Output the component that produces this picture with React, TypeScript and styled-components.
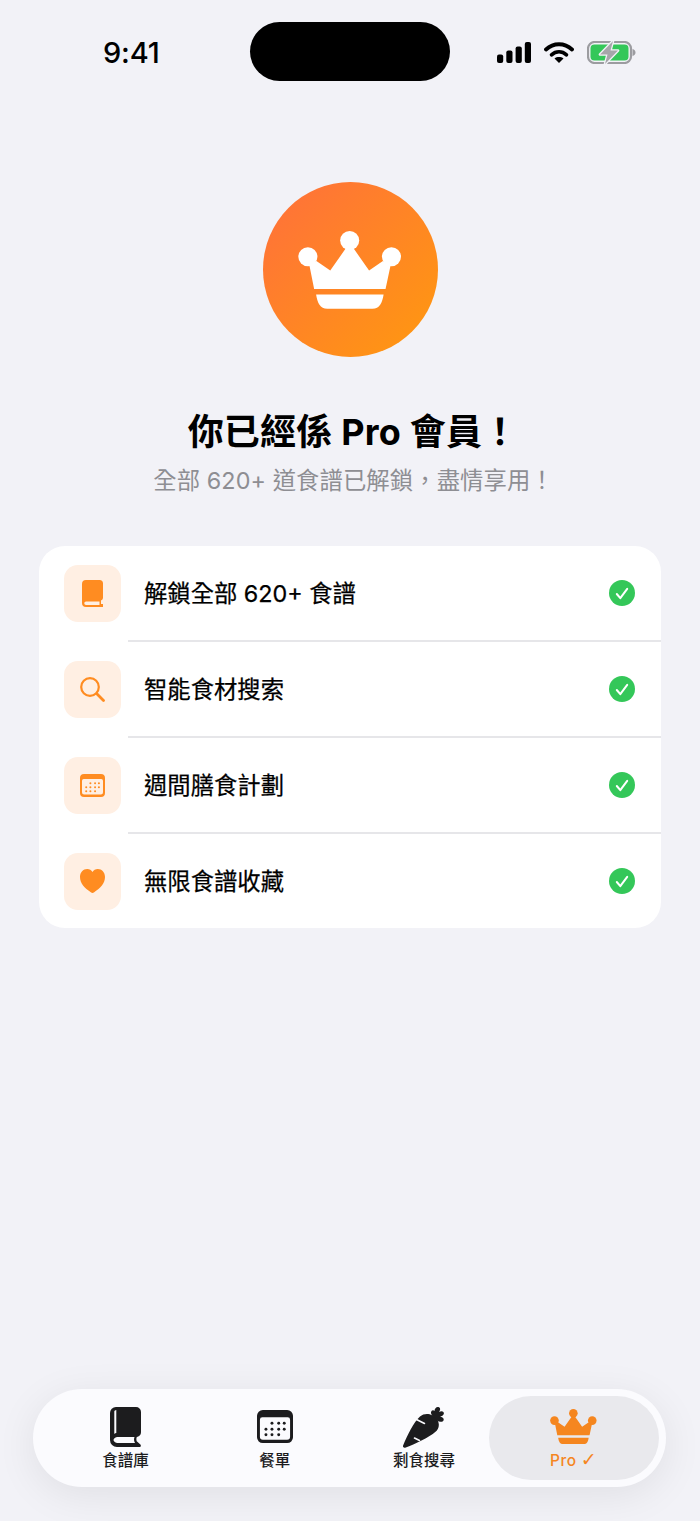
import styled, { createGlobalStyle } from "styled-components";

const sans = `Inter, "Noto Sans CJK TC", sans-serif`;
const orange = "#ff8c21";

const GlobalStyle = createGlobalStyle`
  html, body {
    margin: 0;
    padding: 0;
    background: #f2f2f7;
  }
`;

const features = [
  { label: "解鎖全部 620+ 食譜", icon: "book" },
  { label: "智能食材搜索", icon: "search" },
  { label: "週間膳食計劃", icon: "calendar" },
  { label: "無限食譜收藏", icon: "heart" },
];

// tab bar version, with the white spine line
const TabBookIcon = () => (
  <svg width="31" height="40" viewBox="0 0 31 40">
    <path
      fill="currentColor"
      fillRule="evenodd"
      d="M6 0H26a5 5 0 0 1 5 5V25a5 5 0 0 1-4 5c-.8.6-.8 3.600 0 4.400l3.400 3.200c.9.9.4 2.400-1 2.400H7a7 7 0 0 1-7-7V6a6 6 0 0 1 6-6ZM4.300 4.500V27c.6-.5 1.200-.8 2-.9V3C5.200 3.100 4.300 3.700 4.300 4.500ZM7.500 30C5.500 30 3.500 31.500 3.500 33S5.500 36 7.500 36H25c-1.200-1.800-1.200-4.200-.5-6Z"
    />
  </svg>
);

// list version: nearly solid, thin page line only
const TileBookIcon = () => (
  <svg width="21" height="27" viewBox="0 0 21 27">
    <path
      fill="currentColor"
      fillRule="evenodd"
      d="M4 0H17.500A3.500 3.500 0 0 1 21 3.500V18a2.500 2.500 0 0 1-2 2.400V24h2v3H4a4 4 0 0 1-4-4V4a4 4 0 0 1 4-4ZM4 21.500a1.700 1.700 0 0 0 0 3.500H17.500V21.500Z"
    />
  </svg>
);

const SearchIcon = () => (
  <svg width="25" height="25" viewBox="0 0 25 25" fill="none" stroke="currentColor">
    <circle cx="10" cy="10" r="8.800" strokeWidth="2.200" />
    <path d="M16.800 16.800L23.500 23.500" strokeWidth="2.800" strokeLinecap="round" />
  </svg>
);

const CalendarIcon = ({ width = 25, dot = "#ff8c21" }: { width?: number; dot?: string }) => {
  const dots = [
    [15.4, 13.6], [22.3, 13.6], [28, 13.6],
    [9.2, 19.7], [15.4, 19.7], [22.3, 19.7], [28, 19.7],
    [9.2, 25.5], [15.4, 25.5], [22.3, 25.5],
  ];
  return (
    <svg width={width} height={width * 0.92} viewBox="0 0 37 34">
      <path
        fill="currentColor"
        fillRule="evenodd"
        d="M6 0H31a6 6 0 0 1 6 6V28a6 6 0 0 1-6 6H6a6 6 0 0 1-6-6V6a6 6 0 0 1 6-6ZM5.500 7.500a2.500 2.500 0 0 0-2.500 2.500V27.500a3 3 0 0 0 3 3H31a3 3 0 0 0 3-3V10a2.500 2.500 0 0 0-2.500-2.500Z"
      />
      {dots.map(([x, y]) => (
        <circle key={`${x}-${y}`} cx={x} cy={y} r="1.500" fill={dot} />
      ))}
    </svg>
  );
};

const HeartIcon = () => (
  <svg width="25" height="24" viewBox="0 0 25 24">
    <path
      fill="currentColor"
      d="M12.500 24C12 24 11.400 23.700 10.800 23.300 4.500 19.200 0 14.300 0 8.100 0 3.400 3.200 0 7.200 0c2.400 0 4.200 1.200 5.300 3.100C13.600 1.200 15.400 0 17.800 0 21.800 0 25 3.400 25 8.100c0 6.200-4.500 11.100-10.800 15.200-.6.4-1.200.7-1.700.7Z"
    />
  </svg>
);

const CrownIcon = ({ width }: { width: number }) => (
  <svg width={width} height={width * 0.75} viewBox="143 179 314 237">
    <g fill="currentColor">
      <circle cx="172" cy="257" r="29" />
      <circle cx="299" cy="208" r="29" />
      <circle cx="426" cy="257" r="29" />
      <path d="M176 280L198 270 240 299 299 215 358 299 400 270 424 280 408 355H191Z" />
      <path d="M197 372H402C398 398 390 415 368 415H231C209 415 201 398 197 372Z" />
    </g>
  </svg>
);

const CarrotIcon = () => (
  <svg width="42" height="41" viewBox="0 0 42 41">
    <path
      fill="#1c1c1e"
      d="M1.500 40.800C.2 40.800-.4 39.500.2 38.300 4.500 28 10.500 15.500 17 9.500c3.500-3 8.500-3.200 12-1.200 3.800 1.500 6.500 5 6.800 9 .2 3-1 5.500-3.300 7.500C26 30.500 13 36.800 2.800 40.500c-.5.200-.9.300-1.300.3Z"
    />
    <path fill="none" stroke="#fbfbfe" strokeWidth="1.600" strokeLinecap="round" d="M13.500 12.500L21.500 16.500M11.500 31l5 2.500" />
    <path
      fill="#1c1c1e"
      d="M29 8.500c-1.500-2-1.300-4.300.3-5 .8-.3 1.600-.1 2.200.4C31.700 1.700 33.200-.2 35.200.1c1.600.2 2.200 1.500 1.800 3-.2.7-.5 1.300-.9 1.900 1.600-1 3.300-1.100 4.300 0 1 1.200.4 2.800-1.100 3.700-.8.500-1.500.8-2.200 1 1.700.2 3.400 1 3.600 2.500.2 1.600-1.300 2.800-3.300 2.600-2-.2-3.600-1.300-4.500-2.400l-4-3.900Z"
    />
  </svg>
);

const Check = () => (
  <CheckCircle>
    <svg width="14" height="13" viewBox="0 0 14 13" fill="none">
      <path d="M1.800 7L5.300 11.200 12.200 1.800" stroke="#fff" strokeWidth="2" strokeLinecap="round" strokeLinejoin="round" />
    </svg>
  </CheckCircle>
);

const FeatureIcon = ({ name }: { name: string }) => {
  if (name === "book") return <TileBookIcon />;
  if (name === "search") return <SearchIcon />;
  if (name === "calendar") return <CalendarIcon />;
  return <HeartIcon />;
};

export default function App() {
  return (
    <Page>
      <GlobalStyle />
      <Island />
      <StatusBar>
        <Time>9:41</Time>
        <StatusIcons>
          <svg width="34" height="21" viewBox="0 0 34 21" fill="#000">
            <rect x="0" y="12.500" width="6.200" height="8.500" rx="2" />
            <rect x="9.300" y="8.500" width="6.200" height="12.500" rx="2" />
            <rect x="18.600" y="4.500" width="6.200" height="16.500" rx="2" />
            <rect x="27.800" y="0" width="6.200" height="21" rx="2" />
          </svg>
          <svg width="30" height="21" viewBox="0 0 30 21" fill="none" stroke="#000">
            <path d="M2 7.500C9.500 .5 20.500 .5 28 7.500" strokeWidth="3.800" strokeLinecap="round" />
            <path d="M7.500 12.800C12 8.800 18 8.800 22.500 12.800" strokeWidth="3.600" strokeLinecap="round" />
            <path d="M15 21L10.500 16.400C13 14.500 17 14.500 19.500 16.400Z" fill="#000" stroke="none" />
          </svg>
          <svg width="49" height="23" viewBox="0 0 49 23">
            <rect x="1" y="1" width="43" height="21" rx="6.500" fill="none" stroke="#9c9ca0" strokeWidth="2.200" />
            <rect x="3.500" y="3.500" width="38" height="16" rx="4" fill="#34c759" />
            <path d="M45.500 8v7c1.800-.5 3-1.900 3-3.500s-1.200-3-3-3.500Z" fill="#9c9ca0" />
            <path
              d="M26 0L13 13.500h7.500L18 23 31 9.500h-7.500Z"
              fill="#a6a6aa"
              stroke="#f2f2f7"
              strokeWidth="2.600"
              strokeLinejoin="round"
              paintOrder="stroke"
            />
          </svg>
        </StatusIcons>
      </StatusBar>

      <Hero>
        <CrownCircle>
          <CrownIcon width={104} />
        </CrownCircle>
        <Title>你已經係 Pro 會員！</Title>
        <Subtitle>全部 620+ 道食譜已解鎖，盡情享用！</Subtitle>
      </Hero>

      <Card>
        {features.map((f, i) => (
          <Row key={f.label}>
            <Tile>
              <FeatureIcon name={f.icon} />
            </Tile>
            <RowBody $divider={i < features.length - 1}>
              <RowLabel>{f.label}</RowLabel>
              <Check />
            </RowBody>
          </Row>
        ))}
      </Card>

      <TabBar>
        <Tab>
          <TabGlyph>
            <TabBookIcon />
          </TabGlyph>
          <TabLabel>食譜庫</TabLabel>
        </Tab>
        <Tab>
          <TabGlyph>
            <CalendarIcon width={36} dot="#1c1c1e" />
          </TabGlyph>
          <TabLabel>餐單</TabLabel>
        </Tab>
        <Tab>
          <TabGlyph>
            <CarrotIcon />
          </TabGlyph>
          <TabLabel>剩食搜尋</TabLabel>
        </Tab>
        <Tab $active>
          <TabGlyph>
            <CrownIcon width={47} />
          </TabGlyph>
          <TabLabel>
            <ProText>Pro</ProText> <ProCheck>✓</ProCheck>
          </TabLabel>
        </Tab>
      </TabBar>
    </Page>
  );
}

const Page = styled.div`
  position: relative;
  width: 700px;
  height: 1521px;
  overflow: hidden;
  display: flex;
  flex-direction: column;
  background: #f2f2f7;
  font-family: ${sans};
`;

const Island = styled.div`
  position: absolute;
  top: 22px;
  left: 250px;
  width: 200px;
  height: 59px;
  border-radius: 30px;
  background: #000;
`;

const StatusBar = styled.div`
  height: 104px;
  flex: none;
  display: flex;
  align-items: center;
  justify-content: space-between;
  padding: 0 64px 0 103px;
`;

const Time = styled.span`
  font-size: 29px;
  font-weight: 500;
  color: #000;
  letter-spacing: -0.2px;
`;

const StatusIcons = styled.div`
  display: flex;
  align-items: center;
  gap: 13px;
`;

const Hero = styled.section`
  display: flex;
  flex-direction: column;
  align-items: center;
  padding-top: 78px;
`;

const CrownCircle = styled.div`
  width: 175px;
  height: 175px;
  border-radius: 50%;
  display: flex;
  align-items: center;
  justify-content: center;
  color: #fff;
  background: linear-gradient(135deg, #ff6f3c, #ff9a0e);
`;

const Title = styled.h1`
  margin: 49px 0 0;
  padding-left: 6px;
  font-size: 36px;
  line-height: 52px;
  font-weight: 700;
  color: #000;
  letter-spacing: 0.2px;
`;

const Subtitle = styled.p`
  margin: 6px 0 0;
  padding-left: 7px;
  font-size: 23.33px;
  line-height: 34px;
  font-weight: 400;
  color: #8e8e93;
  letter-spacing: 0.1px;
`;

const Card = styled.section`
  margin: 48px 39px 0;
  border-radius: 26px;
  background: #fff;
  overflow: hidden;
`;

const Row = styled.div`
  height: 96px;
  display: flex;
  padding-left: 25px;
  box-sizing: border-box;

  &:last-child {
    height: 94px;
  }
`;

const Tile = styled.div`
  flex: none;
  margin: 18.5px 7px 0 0;
  width: 57px;
  height: 57px;
  border-radius: 14px;
  display: flex;
  align-items: center;
  justify-content: center;
  color: ${orange};
  background: #ffefe3;
`;

const RowBody = styled.div<{ $divider: boolean }>`
  flex: 1;
  display: flex;
  align-items: center;
  justify-content: space-between;
  padding: 0 26.5px 0 16px;
  border-bottom: ${(p) => (p.$divider ? "2px solid #e6e6e9" : "0")};
  box-sizing: border-box;
`;

const RowLabel = styled.span`
  padding-bottom: 3px;
  font-size: 23.33px;
  font-weight: 400;
  color: #000;
  -webkit-text-stroke: 0.25px #000;
`;

const CheckCircle = styled.span`
  width: 26px;
  height: 26px;
  border-radius: 50%;
  display: flex;
  align-items: center;
  justify-content: center;
  background: #34c759;
`;

const TabBar = styled.nav`
  margin: auto 34px 34px 33px;
  height: 98px;
  padding: 0 18px;
  box-sizing: border-box;
  display: flex;
  border-radius: 49px;
  background: #fbfbfe;
  box-shadow: 0 8px 40px rgba(0, 0, 0, 0.08);
`;

const Tab = styled.div<{ $active?: boolean }>`
  position: relative;
  flex: 1;
  display: flex;
  flex-direction: column;
  align-items: center;
  color: ${(p) => (p.$active ? "#f5861f" : "#1c1c1e")};

  &::before {
    content: "";
    display: ${(p) => (p.$active ? "block" : "none")};
    position: absolute;
    top: 7px;
    bottom: 7px;
    left: -10px;
    right: -11px;
    border-radius: 42px;
    background: #e9e9ed;
  }
`;

const TabGlyph = styled.div`
  position: relative;
  height: 44px;
  margin-top: 16px;
  display: flex;
  align-items: center;
  justify-content: center;
`;

const TabLabel = styled.span`
  position: relative;
  margin-top: 1px;
  font-size: 15.5px;
  line-height: 22px;
  font-weight: 500;
`;

const ProText = styled.span`
  letter-spacing: 0.5px;
`;

const ProCheck = styled.span`
  font-family: "DejaVu Sans", sans-serif;
  font-size: 19px;
  line-height: 0;
  font-weight: 400;
`;
